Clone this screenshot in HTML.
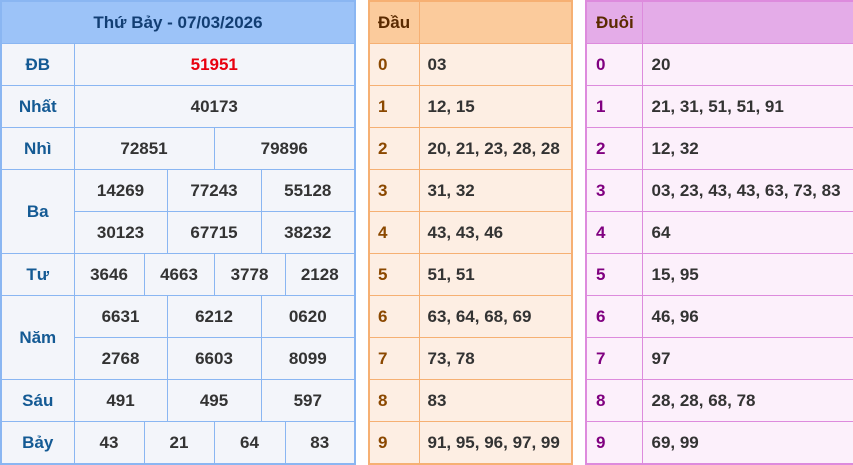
<!DOCTYPE html>
<html><head><meta charset="utf-8"><style>
body{margin:0;width:853px;height:464px;background:#fff;font-family:"Liberation Sans",Arial,sans-serif;font-weight:bold;font-size:17px;position:relative;overflow:hidden}
table{position:absolute;top:0;border-collapse:collapse;table-layout:fixed}
td{padding:0;height:41px;text-align:center;color:#333}
#m{left:0;width:355px;border:2px solid #8ab6f2}
#m td{border:1px solid #8ab6f2;background:#f3f5fa}
#m .h td{background:#9cc3f8;color:#123e73;font-size:17px;height:41px}
#m td.l{color:#145a94}
#d{left:368px;width:205px;border:2px solid #f6b073}
#d td{border:1px solid #f6b073;background:#fdeee3;text-align:left;padding-left:8px}
#d .h td{background:#fbcb9c;color:#5a2a00;height:41px}
#d td.k{color:#8b4800}
#t{left:585px;width:270px;border:2px solid #dd8bdd}
#t td{border:1px solid #dd8bdd;background:#fcf0fb;text-align:left;padding-left:9px}
#t .h td{background:#e4ace8;color:#5a2a00;height:41px}
#t td.k{color:#800080}
.r{color:#e8000f!important}
</style></head><body>
<table id="m">
<colgroup><col style="width:73px"><col style="width:70px"><col style="width:23px"><col style="width:47px"><col style="width:47px"><col style="width:24px"><col style="width:70px"></colgroup>
<tr class="h"><td colspan="7">Thứ Bảy - 07/03/2026</td></tr>
<tr><td class="l">ĐB</td><td colspan="6" class="r">51951</td></tr>
<tr><td class="l">Nhất</td><td colspan="6">40173</td></tr>
<tr><td class="l">Nhì</td><td colspan="3">72851</td><td colspan="3">79896</td></tr>
<tr><td class="l" rowspan="2">Ba</td><td colspan="2">14269</td><td colspan="2">77243</td><td colspan="2">55128</td></tr>
<tr><td colspan="2">30123</td><td colspan="2">67715</td><td colspan="2">38232</td></tr>
<tr><td class="l">Tư</td><td>3646</td><td colspan="2">4663</td><td colspan="2">3778</td><td>2128</td></tr>
<tr><td class="l" rowspan="2">Năm</td><td colspan="2">6631</td><td colspan="2">6212</td><td colspan="2">0620</td></tr>
<tr><td colspan="2">2768</td><td colspan="2">6603</td><td colspan="2">8099</td></tr>
<tr><td class="l">Sáu</td><td colspan="2">491</td><td colspan="2">495</td><td colspan="2">597</td></tr>
<tr><td class="l">Bảy</td><td>43</td><td colspan="2">21</td><td colspan="2">64</td><td>83</td></tr>
</table>
<table id="d">
<colgroup><col style="width:50px"><col></colgroup>
<tr class="h"><td>Đầu</td><td></td></tr>
<tr><td class="k">0</td><td>03</td></tr>
<tr><td class="k">1</td><td>12, 15</td></tr>
<tr><td class="k">2</td><td>20, 21, 23, 28, 28</td></tr>
<tr><td class="k">3</td><td>31, 32</td></tr>
<tr><td class="k">4</td><td>43, 43, 46</td></tr>
<tr><td class="k">5</td><td>51, 51</td></tr>
<tr><td class="k">6</td><td>63, 64, 68, 69</td></tr>
<tr><td class="k">7</td><td>73, 78</td></tr>
<tr><td class="k">8</td><td>83</td></tr>
<tr><td class="k">9</td><td>91, 95, 96, 97, 99</td></tr>
</table>
<table id="t">
<colgroup><col style="width:56px"><col></colgroup>
<tr class="h"><td>Đuôi</td><td></td></tr>
<tr><td class="k">0</td><td>20</td></tr>
<tr><td class="k">1</td><td>21, 31, 51, 51, 91</td></tr>
<tr><td class="k">2</td><td>12, 32</td></tr>
<tr><td class="k">3</td><td>03, 23, 43, 43, 63, 73, 83</td></tr>
<tr><td class="k">4</td><td>64</td></tr>
<tr><td class="k">5</td><td>15, 95</td></tr>
<tr><td class="k">6</td><td>46, 96</td></tr>
<tr><td class="k">7</td><td>97</td></tr>
<tr><td class="k">8</td><td>28, 28, 68, 78</td></tr>
<tr><td class="k">9</td><td>69, 99</td></tr>
</table>
</body></html>
